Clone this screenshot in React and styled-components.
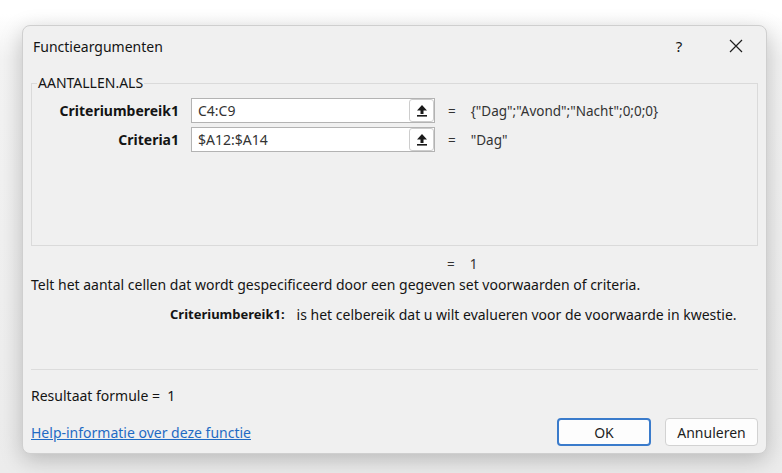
import styled, { createGlobalStyle } from "styled-components"

const Global = createGlobalStyle`
  html, body {
    margin: 0;
    padding: 0;
    background: #ffffff;
  }
  body {
    font-family: "Noto Sans", "Open Sans", sans-serif;
    font-size: 14px;
    color: #141414;
  }
`

const Pagina = styled.div`
  width: 782px;
  height: 473px;
  box-sizing: border-box;
  padding: 25px 0 0 22px;
  overflow: hidden;
  background: linear-gradient(#ffffff 0, #ffffff 14px, #f3f3f3 60px, #ececec 100%);
`

const Venster = styled.div`
  width: 745px;
  height: 429px;
  box-sizing: border-box;
  background: #f0f0f0;
  border: 1px solid #cfcfcf;
  border-radius: 8px;
  box-shadow: 0 6px 22px rgba(0, 0, 0, 0.22);
  display: flex;
  flex-direction: column;
`

const Titelbalk = styled.div`
  height: 40px;
  display: flex;
  align-items: center;
  padding: 0 7px 0 10px;
`

const Titel = styled.div`
  flex: 1;
`

const TitelKnop = styled.div`
  width: ${p => p.$w}px;
  margin-right: ${p => p.$mr || 0}px;
  height: 40px;
  display: flex;
  align-items: center;
  justify-content: center;
  font-size: 15px;
`

const Inhoud = styled.div`
  flex: 1;
  display: flex;
  flex-direction: column;
  padding: 9px 8px 0 8px;
`

const Groep = styled.fieldset`
  margin: 0;
  padding: 7px 0 0 0;
  border: 1px solid #dadada;
  min-width: 0;
`

const Legenda = styled.legend`
  margin-left: 5px;
  padding: 0 1px;
  line-height: 16px;
`

const Regels = styled.div`
  height: 147px;
  display: flex;
  flex-direction: column;
  gap: 4px;
`

const Rij = styled.div`
  display: grid;
  grid-template-columns: 147px 244px auto;
  column-gap: 12px;
  align-items: center;
  height: ${p => p.$h || 25}px;
  margin-top: ${p => p.$mt || 0}px;
`

const Label = styled.div`
  text-align: right;
  font-weight: bold;
`

const Invoer = styled.div`
  height: 25px;
  box-sizing: border-box;
  border: 1px solid #b3b3b3;
  background: #ffffff;
  display: flex;
  align-items: center;
  padding-left: 6px;
  color: #333333;
`

const InvoerTekst = styled.div`
  flex: 1;
`

const BereikKnop = styled.div`
  width: 25px;
  height: 23px;
  box-sizing: border-box;
  border: 1px solid #cdcdcd;
  border-radius: 3px;
  background: #ffffff;
  display: flex;
  align-items: center;
  justify-content: center;
`

const Waarde = styled.div`
  display: flex;
  gap: 15px;
  padding-left: 1px;
  font-size: 13.5px;
  color: #333333;
  white-space: nowrap;
`

const Tekst = styled.div`
  line-height: 17px;
  margin-top: ${p => p.$mt || 0}px;
`

const ArgUitleg = styled.div`
  margin-top: 13px;
  line-height: 17px;
  display: flex;
  gap: 12px;
  padding-left: 139px;
  white-space: nowrap;
`

const Vet = styled.span`
  font-weight: bold;
  font-size: 13px;
`

const Scheiding = styled.div`
  height: 1px;
  background: #dcdcdc;
  margin-top: 46px;
`

const Voet = styled.div`
  margin-top: 14px;
  display: flex;
  align-items: center;
`

const Koppeling = styled.a`
  flex: 1;
  color: #1f6bc4;
  text-decoration: underline;
  cursor: pointer;
`

const Knop = styled.button`
  width: ${p => p.$w}px;
  height: 28px;
  margin-left: ${p => p.$ml || 0}px;
  box-sizing: border-box;
  font: inherit;
  color: #1e1e1e;
  background: #fdfdfd;
  border: ${p => (p.$actief ? "2px solid #3a7bcb" : "1px solid #d2d2d2")};
  border-radius: 4px;
  padding: 0;
`

const Pijl = () => (
  <svg width="12" height="13" viewBox="0 0 12 13">
    <path d="M6 1 L11 6.5 H7.5 V10 H4.5 V6.5 H1 Z" fill="#1a1a1a" />
    <rect x="1" y="11" width="10" height="1.6" fill="#1a1a1a" />
  </svg>
)

const Sluiten = () => (
  <svg width="14" height="14" viewBox="0 0 14 14">
    <path d="M1 1 L13 13 M13 1 L1 13" stroke="#1e1e1e" strokeWidth="1.2" />
  </svg>
)

const argumenten = [
  { label: "Criteriumbereik1", invoer: "C4:C9", waarde: "{\"Dag\";\"Avond\";\"Nacht\";0;0;0}" },
  { label: "Criteria1", invoer: "$A12:$A14", waarde: "\"Dag\"" },
]

export default function App() {
  return (
    <Pagina>
      <Global />
      <Venster>
        <Titelbalk>
          <Titel>Functieargumenten</Titel>
          <TitelKnop $w={40} $mr={14}>?</TitelKnop>
          <TitelKnop $w={46}><Sluiten /></TitelKnop>
        </Titelbalk>
        <Inhoud>
          <Groep>
            <Legenda>AANTALLEN.ALS</Legenda>
            <Regels>
              {argumenten.map(a => (
                <Rij key={a.label}>
                  <Label>{a.label}</Label>
                  <Invoer>
                    <InvoerTekst>{a.invoer}</InvoerTekst>
                    <BereikKnop><Pijl /></BereikKnop>
                  </Invoer>
                  <Waarde><span>=</span><span>{a.waarde}</span></Waarde>
                </Rij>
              ))}
            </Regels>
          </Groep>
          <Rij $h={17} $mt={9}>
            <span />
            <span />
            <Waarde><span>=</span><span>1</span></Waarde>
          </Rij>
          <Tekst $mt={4}>
            Telt het aantal cellen dat wordt gespecificeerd door een gegeven set voorwaarden of criteria.
          </Tekst>
          <ArgUitleg>
            <Vet>Criteriumbereik1:</Vet>
            <span>is het celbereik dat u wilt evalueren voor de voorwaarde in kwestie.</span>
          </ArgUitleg>
          <Scheiding />
          <Tekst $mt={17}>Resultaat formule =&nbsp; 1</Tekst>
          <Voet>
            <Koppeling>Help-informatie over deze functie</Koppeling>
            <Knop $w={94} $actief>OK</Knop>
            <Knop $w={93} $ml={14}>Annuleren</Knop>
          </Voet>
        </Inhoud>
      </Venster>
    </Pagina>
  )
}
